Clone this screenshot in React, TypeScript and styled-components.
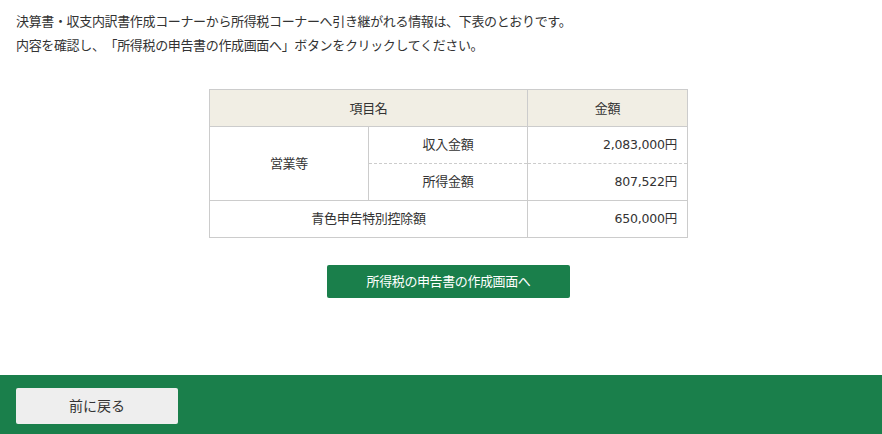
import React from 'react';
import styled, { createGlobalStyle } from 'styled-components';

const GlobalStyle = createGlobalStyle`
    html, body {
        margin: 0;
        padding: 0;
        background: #fff;
    }
    body {
        font-family: "Noto Sans CJK JP", "Liberation Sans", sans-serif;
        color: #333;
        font-size: 13px;
        text-spacing-trim: space-all;
    }
`

const Page = styled.div`
    min-height: 434px;
    display: flex;
    flex-direction: column;
`

const Main = styled.main`
    flex: 1;
    padding: 9px 16px 0 16px;
`

const Lead = styled.p`
    margin: 0;
    font-size: 13px;
    line-height: 24px;
    letter-spacing: -0.35px;
`

const Center = styled.div`
    display: flex;
    flex-direction: column;
    align-items: center;
    padding-left: 15px;
    margin-left: -16px;
    margin-right: -16px;
`

const Table = styled.table`
    margin-top: 32px;
    width: 478px;
    border-collapse: collapse;
    table-layout: fixed;
    font-size: 13px;
    letter-spacing: -0.3px;
`

const Th = styled.th`
    background: #f1eee4;
    border: 1px solid #ccc;
    font-weight: normal;
    height: 35px;
    padding: 0 0 1px;
    text-align: center;
`

type cellProps = {
    $align?: 'left' | 'center' | 'right'
    $dashedBottom?: boolean
    $dashedTop?: boolean
    $num?: boolean
}

const Td = styled.td<cellProps>`
    border: 1px solid #ccc;
    ${p => p.$dashedBottom ? 'border-bottom: 1px dashed #ccc;' : ''}
    ${p => p.$dashedTop ? 'border-top: 1px dashed #ccc;' : ''}
    height: 33px;
    padding: 0 10px 3px;
    text-align: ${p => p.$align || 'center'};
    ${p => p.$num ? `
        font-family: "DejaVu Sans", "Noto Sans CJK JP", sans-serif;
        font-size: 12.5px;
        letter-spacing: -0.2px;
    ` : ''}
`

const PrimaryBtn = styled.button`
    margin-top: 27px;
    width: 243px;
    height: 33px;
    padding: 0 0 2px;
    background: #1a7f4b;
    color: #fff;
    border: none;
    border-radius: 2px;
    font-family: inherit;
    font-size: 13px;
    letter-spacing: -0.4px;
    cursor: pointer;
`

const Footer = styled.footer`
    background: #1a7f4b;
    padding: 13px 16px 10px;
`

const BackBtn = styled.button`
    width: 162px;
    height: 36px;
    padding: 0 0 2px;
    background: #eeeeee;
    color: #333;
    border: none;
    border-radius: 2px;
    font-family: inherit;
    font-size: 14px;
    cursor: pointer;
`

const App = (): JSX.Element => {
    return (
        <Page>
            <GlobalStyle />
            <Main>
                <Lead>決算書・収支内訳書作成コーナーから所得税コーナーへ引き継がれる情報は、下表のとおりです。</Lead>
                <Lead>内容を確認し、「所得税の申告書の作成画面へ」ボタンをクリックしてください。</Lead>
                <Center>
                    <Table>
                        <colgroup>
                            <col style={{ width: '159px' }} />
                            <col style={{ width: '159px' }} />
                            <col style={{ width: '160px' }} />
                        </colgroup>
                        <thead>
                            <tr>
                                <Th colSpan={2}>項目名</Th>
                                <Th>金額</Th>
                            </tr>
                        </thead>
                        <tbody>
                            <tr>
                                <Td rowSpan={2}>営業等</Td>
                                <Td $dashedBottom>収入金額</Td>
                                <Td $dashedBottom $num $align="right">2,083,000円</Td>
                            </tr>
                            <tr>
                                <Td $dashedTop>所得金額</Td>
                                <Td $dashedTop $num $align="right">807,522円</Td>
                            </tr>
                            <tr>
                                <Td colSpan={2}>青色申告特別控除額</Td>
                                <Td $num $align="right">650,000円</Td>
                            </tr>
                        </tbody>
                    </Table>
                    <PrimaryBtn type="button">所得税の申告書の作成画面へ</PrimaryBtn>
                </Center>
            </Main>
            <Footer>
                <BackBtn type="button">前に戻る</BackBtn>
            </Footer>
        </Page>
    )
}

export default App
